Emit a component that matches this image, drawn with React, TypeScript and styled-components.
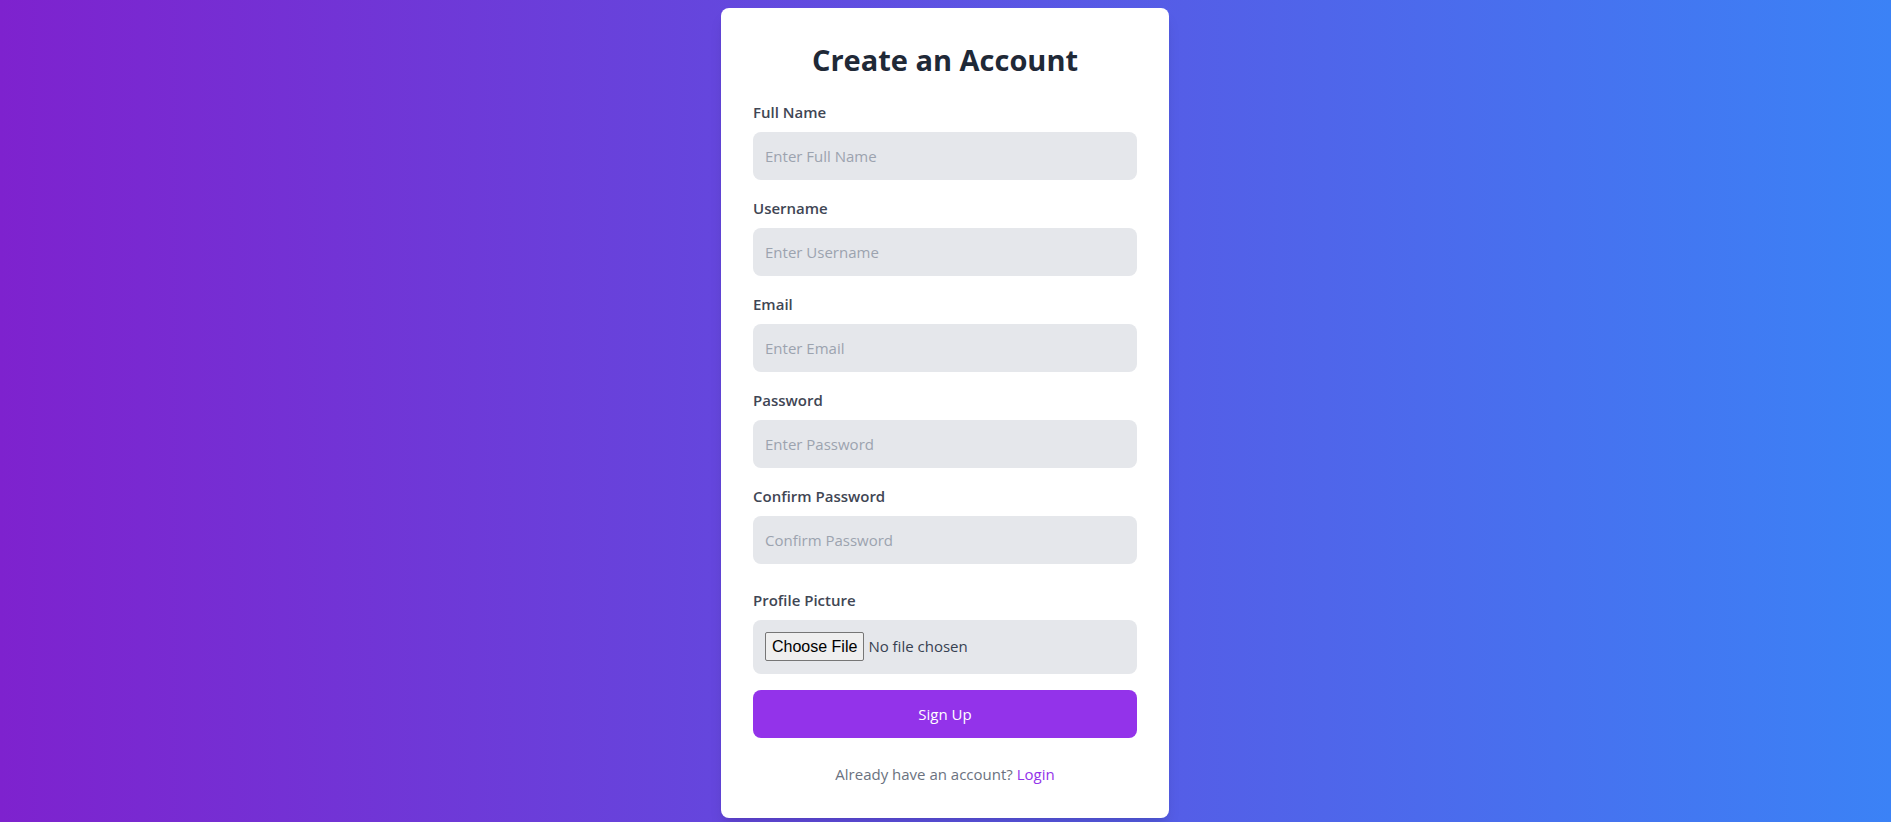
import styled, { createGlobalStyle } from "styled-components";

const GlobalStyle = createGlobalStyle`
  * { box-sizing: border-box; }
  html, body { margin: 0; padding: 0; }
  body {
    font-family: "Open Sans", "Noto Sans", sans-serif;
    -webkit-font-smoothing: antialiased;
  }
`;

const Page = styled.div`
  min-height: 100vh;
  display: flex;
  justify-content: center;
  align-items: flex-start;
  padding-top: 8px;
  background: linear-gradient(to right, #7e22ce, #3b82f6);
`;

const Card = styled.form`
  width: 448px;
  margin-right: 1px;
  background: #ffffff;
  border-radius: 8px;
  padding: 32px;
  box-shadow: 0 10px 15px -3px rgba(0, 0, 0, 0.1), 0 4px 6px -4px rgba(0, 0, 0, 0.1);
`;

const Title = styled.h2`
  margin: 0 0 24px;
  padding-top: 2px;
  height: 36px;
  font-size: 29px;
  line-height: 36px;
  font-weight: 700;
  text-align: center;
  color: #1f2937;
`;

const Field = styled.div<{ $gap?: number }>`
  margin-bottom: ${(p) => p.$gap ?? 16}px;
`;

const Label = styled.label`
  display: block;
  margin-bottom: 8px;
  font-size: 15px;
  line-height: 24px;
  font-weight: 600;
  color: #3f4654;
`;

const Input = styled.input`
  display: block;
  width: 100%;
  height: 48px;
  padding: 12px;
  border: none;
  border-radius: 8px;
  background: #e5e7eb;
  font-family: inherit;
  font-size: 15px;
  line-height: 24px;
  color: #1f2937;
  outline: none;

  &::placeholder {
    color: #9ca3af;
  }
`;

const FileInput = styled.input`
  display: block;
  width: 100%;
  padding: 12px 12px 13px;
  border-radius: 8px;
  background: #e5e7eb;
  font-family: inherit;
  font-size: 15px;
  line-height: 24px;
  color: #374151;

  &::file-selector-button {
    font-family: "Liberation Sans", Arial, sans-serif;
    font-size: 16px;
    height: 29px;
    padding: 0 6px;
    margin-right: 4px;
    color: #000;
    background: #efefef;
    border: 1px solid #767676;
    border-radius: 2px;
  }
`;

const SubmitButton = styled.button`
  display: block;
  width: 100%;
  height: 48px;
  margin-top: 16px;
  border: none;
  border-radius: 8px;
  background: #9333ea;
  color: #ffffff;
  font-family: inherit;
  font-size: 15px;
  line-height: 24px;
  cursor: pointer;
`;

const Footer = styled.p`
  margin: 24px 0 0;
  text-align: center;
  font-size: 15px;
  line-height: 24px;
  color: #6b7280;

  a {
    color: #9333ea;
    text-decoration: none;
  }
`;

const fields = [
  { id: "fullName", label: "Full Name", type: "text", placeholder: "Enter Full Name" },
  { id: "username", label: "Username", type: "text", placeholder: "Enter Username" },
  { id: "email", label: "Email", type: "email", placeholder: "Enter Email" },
  { id: "password", label: "Password", type: "password", placeholder: "Enter Password" },
  { id: "confirm", label: "Confirm Password", type: "password", placeholder: "Confirm Password" },
];

export default function App() {
  return (
    <>
      <GlobalStyle />
      <Page>
        <Card onSubmit={(e) => e.preventDefault()}>
          <Title>Create an Account</Title>
          {fields.map((f, i) => (
            <Field key={f.id} $gap={i === fields.length - 1 ? 24 : 16}>
              <Label htmlFor={f.id}>{f.label}</Label>
              <Input id={f.id} type={f.type} placeholder={f.placeholder} />
            </Field>
          ))}
          <Field $gap={0}>
            <Label htmlFor="avatar">Profile Picture</Label>
            <FileInput id="avatar" type="file" accept="image/*" />
          </Field>
          <SubmitButton type="submit">Sign Up</SubmitButton>
          <Footer>
            Already have an account? <a href="#">Login</a>
          </Footer>
        </Card>
      </Page>
    </>
  );
}
